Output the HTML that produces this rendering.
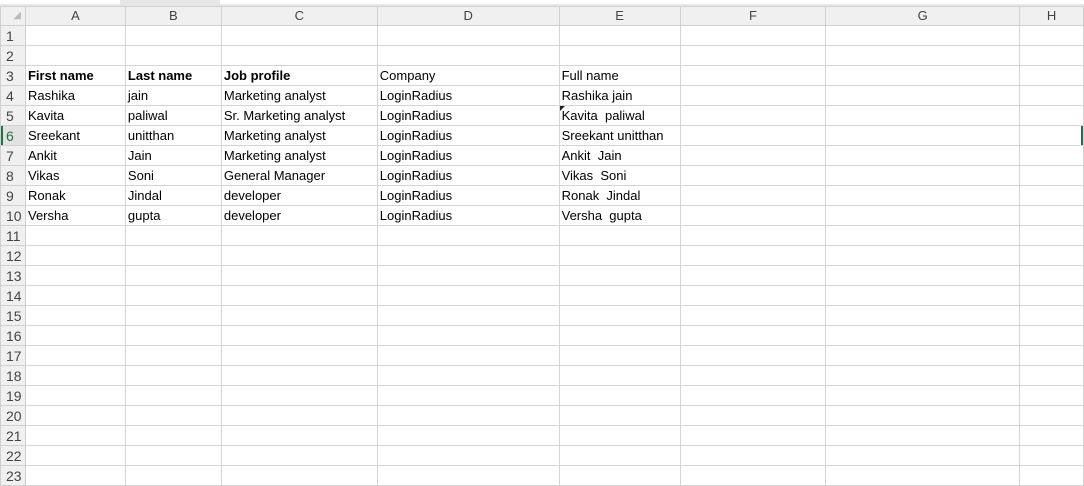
<!DOCTYPE html>
<html><head><style>
body{margin:0;width:1084px;height:478px;overflow:hidden;background:#fff;font-family:"Liberation Sans",sans-serif;position:relative}
.top{position:absolute;left:0;top:0;width:1084px;height:6px;background:#e6e6e6}
.top i{position:absolute;top:0;height:4px;background:#fff}
table{position:absolute;left:0;top:6px;border-collapse:collapse;table-layout:fixed}
td{border:1px solid #d4d4d4;height:19px;box-sizing:border-box;padding:0 0 0 2px;font-size:13px;color:#000;white-space:nowrap;overflow:visible;line-height:18px}
tr{height:20px}
tr:first-child{height:19px}
tr:first-child td{background:#f0f0f0;color:#444;text-align:center;height:18px;border-color:#d0d0d0;padding:0}
td.h{background:#f0f0f0;color:#444;text-align:left;padding-left:5px;border-color:#d0d0d0;font-size:14px}
td.sel{background:#e2e2e2;color:#217346;box-shadow:inset 2px 0 0 #217346}
b{font-weight:bold}
.tri{position:relative}
.tri:before{content:"";position:absolute;left:0;top:0;border-top:5px solid #222;border-right:5px solid transparent}
</style></head><body>
<div class="top"><i style="left:0;width:120px"></i><i style="left:220px;width:864px"></i></div>
<table>
<colgroup><col style="width:25px"><col style="width:100px"><col style="width:96px"><col style="width:156px"><col style="width:182px"><col style="width:121px"><col style="width:146px"><col style="width:194px"><col style="width:64px"></colgroup>
<tr><td style="color:#bbb;font-size:10px;text-align:right;padding-right:4px">◢</td><td>A</td><td>B</td><td>C</td><td>D</td><td>E</td><td>F</td><td>G</td><td>H</td></tr>
<tr><td class="h">1</td><td></td><td></td><td></td><td></td><td></td><td></td><td></td><td></td></tr>
<tr><td class="h">2</td><td></td><td></td><td></td><td></td><td></td><td></td><td></td><td></td></tr>
<tr><td class="h">3</td><td><b>First name</b></td><td><b>Last name</b></td><td><b>Job profile</b></td><td>Company</td><td>Full name</td><td></td><td></td><td></td></tr>
<tr><td class="h">4</td><td>Rashika</td><td>jain</td><td>Marketing analyst</td><td>LoginRadius</td><td>Rashika jain</td><td></td><td></td><td></td></tr>
<tr><td class="h">5</td><td>Kavita</td><td>paliwal</td><td>Sr. Marketing analyst</td><td>LoginRadius</td><td class="tri">Kavita&nbsp; paliwal</td><td></td><td></td><td></td></tr>
<tr><td class="h sel">6</td><td>Sreekant</td><td>unitthan</td><td>Marketing analyst</td><td>LoginRadius</td><td>Sreekant unitthan</td><td></td><td></td><td style="box-shadow:inset -2px 0 0 #217346"></td></tr>
<tr><td class="h">7</td><td>Ankit</td><td>Jain</td><td>Marketing analyst</td><td>LoginRadius</td><td>Ankit&nbsp; Jain</td><td></td><td></td><td></td></tr>
<tr><td class="h">8</td><td>Vikas</td><td>Soni</td><td>General Manager</td><td>LoginRadius</td><td>Vikas&nbsp; Soni</td><td></td><td></td><td></td></tr>
<tr><td class="h">9</td><td>Ronak</td><td>Jindal</td><td>developer</td><td>LoginRadius</td><td>Ronak&nbsp; Jindal</td><td></td><td></td><td></td></tr>
<tr><td class="h">10</td><td>Versha</td><td>gupta</td><td>developer</td><td>LoginRadius</td><td>Versha&nbsp; gupta</td><td></td><td></td><td></td></tr>
<tr><td class="h">11</td><td></td><td></td><td></td><td></td><td></td><td></td><td></td><td></td></tr>
<tr><td class="h">12</td><td></td><td></td><td></td><td></td><td></td><td></td><td></td><td></td></tr>
<tr><td class="h">13</td><td></td><td></td><td></td><td></td><td></td><td></td><td></td><td></td></tr>
<tr><td class="h">14</td><td></td><td></td><td></td><td></td><td></td><td></td><td></td><td></td></tr>
<tr><td class="h">15</td><td></td><td></td><td></td><td></td><td></td><td></td><td></td><td></td></tr>
<tr><td class="h">16</td><td></td><td></td><td></td><td></td><td></td><td></td><td></td><td></td></tr>
<tr><td class="h">17</td><td></td><td></td><td></td><td></td><td></td><td></td><td></td><td></td></tr>
<tr><td class="h">18</td><td></td><td></td><td></td><td></td><td></td><td></td><td></td><td></td></tr>
<tr><td class="h">19</td><td></td><td></td><td></td><td></td><td></td><td></td><td></td><td></td></tr>
<tr><td class="h">20</td><td></td><td></td><td></td><td></td><td></td><td></td><td></td><td></td></tr>
<tr><td class="h">21</td><td></td><td></td><td></td><td></td><td></td><td></td><td></td><td></td></tr>
<tr><td class="h">22</td><td></td><td></td><td></td><td></td><td></td><td></td><td></td><td></td></tr>
<tr><td class="h">23</td><td></td><td></td><td></td><td></td><td></td><td></td><td></td><td></td></tr>
</table>
</body></html>
